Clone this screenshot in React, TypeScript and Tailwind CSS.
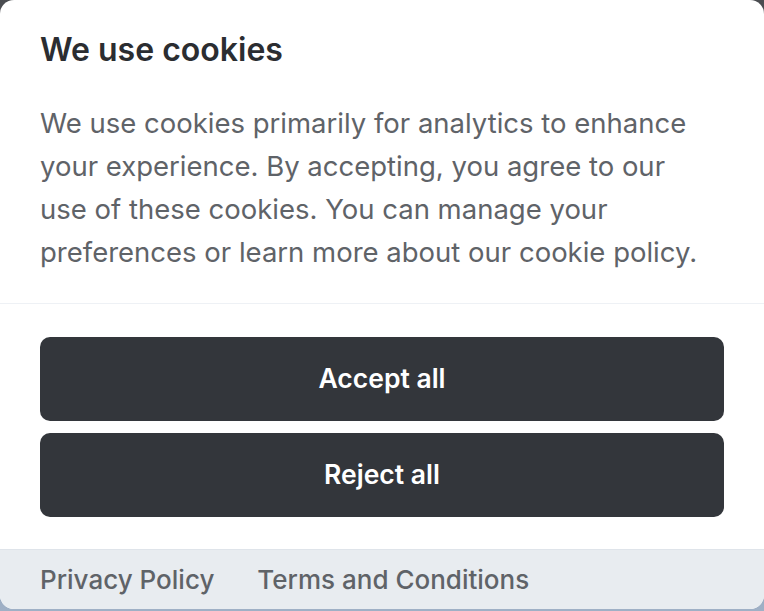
export default function App() {
  return (
    <div className="h-[611px] w-[764px] overflow-hidden bg-gradient-to-b from-[#4a4c50] to-[#9fb0c6] font-['Inter','Noto_Sans',sans-serif]">
      <div className="flex h-[609px] w-[764px] flex-col overflow-hidden rounded-[14px] bg-white">
        <div className="px-10 pt-[30px] pb-[29px]">
          <h2 className="text-[32px] leading-[40px] font-semibold text-[#2b2d31]">We use cookies</h2>
          <p className="mt-[32px] max-w-[672px] text-[27.5px] leading-[43px] text-[#5f6368]">
            We use cookies primarily for analytics to enhance your experience. By accepting, you agree to our use of
            these cookies. You can manage your preferences or learn more about our cookie policy.
          </p>
        </div>
        <div className="flex flex-col gap-[12px] border-t border-[#eef1f5] px-10 pt-[33px] pb-[32px]">
          <button className="h-[84px] rounded-[10px] bg-[#33363b] text-[26.5px] font-semibold text-white">
            Accept all
          </button>
          <button className="h-[84px] rounded-[10px] bg-[#33363b] text-[26.5px] font-semibold text-white">
            Reject all
          </button>
        </div>
        <div className="flex flex-1 items-center gap-[43px] border-t border-[#dfe4ea] bg-[#e8ecf0] px-10">
          <a className="text-[26px] font-medium text-[#5f6368]">Privacy Policy</a>
          <a className="text-[26px] font-medium text-[#5f6368]">Terms and Conditions</a>
        </div>
      </div>
    </div>
  );
}
